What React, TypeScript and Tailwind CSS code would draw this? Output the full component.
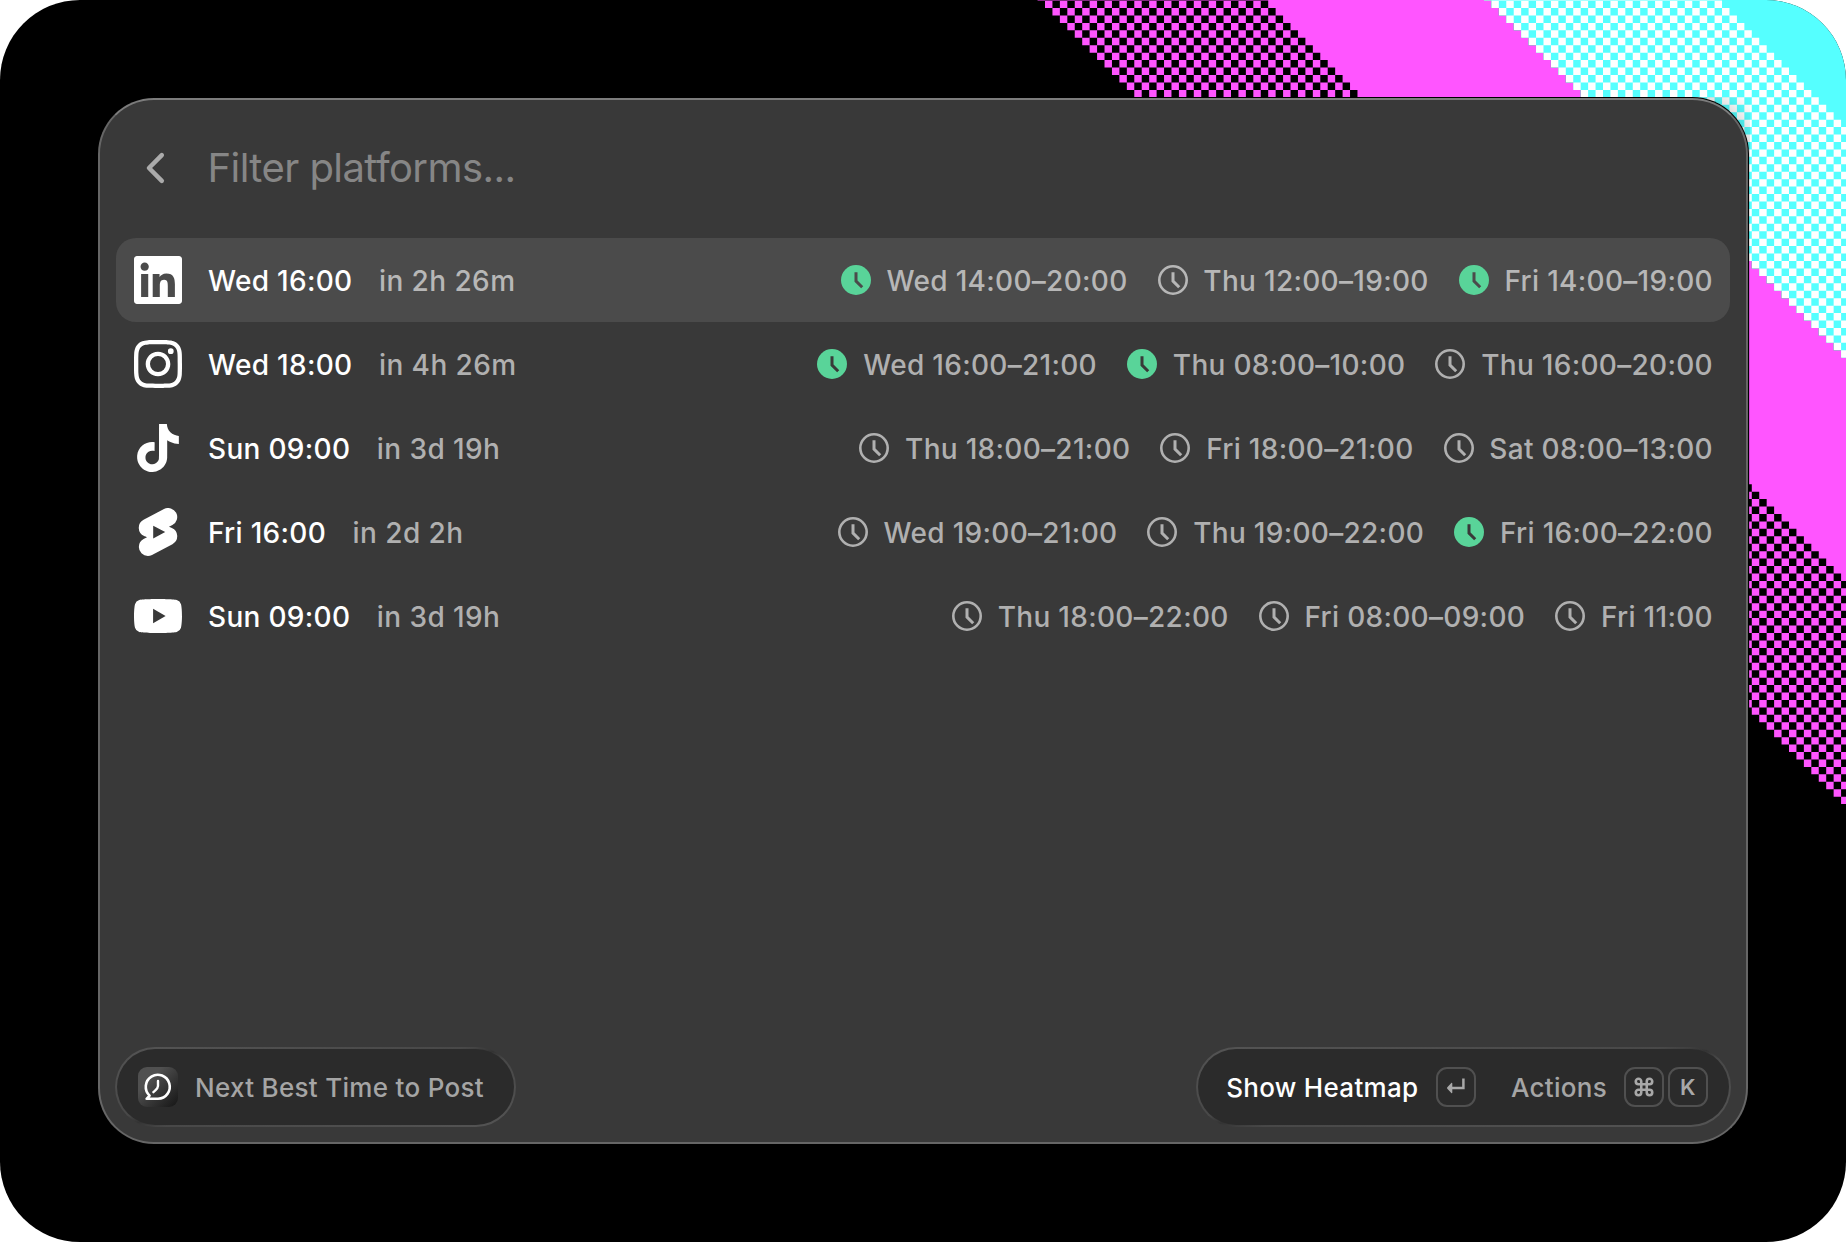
import { Command } from "lucide-react";
import {
  SiInstagram,
  SiTiktok,
  SiYoutube,
  SiYoutubeshorts,
} from "react-icons/si";
import type { ComponentType, ReactNode } from "react";

interface ISlot {
  label: string;
  best?: boolean;
}

interface IPlatform {
  id: string;
  icon: ComponentType<{ className?: string }>;
  next: string;
  countdown: string;
  slots: ISlot[];
}

function LinkedInIcon({ className }: { className?: string }) {
  return (
    <svg viewBox="0 0 24 24" fill="currentColor" className={className}>
      <path d="M20.447 20.452h-3.554v-5.569c0-1.328-.027-3.037-1.852-3.037-1.853 0-2.136 1.445-2.136 2.939v5.667H9.351V9h3.414v1.561h.046c.477-.9 1.637-1.85 3.37-1.85 3.601 0 4.267 2.37 4.267 5.455v6.286zM5.337 7.433c-1.144 0-2.063-.926-2.063-2.065 0-1.138.92-2.063 2.063-2.063 1.14 0 2.064.925 2.064 2.063 0 1.139-.925 2.065-2.064 2.065zm1.782 13.019H3.555V9h3.564v11.452zM22.5 0H1.5C.7 0 0 .7 0 1.5v21C0 23.3.7 24 1.5 24h21c.8 0 1.5-.7 1.5-1.5v-21C24 .7 23.3 0 22.5 0z" />
    </svg>
  );
}

const platforms: IPlatform[] = [
  {
    id: "linkedin",
    icon: LinkedInIcon,
    next: "Wed 16:00",
    countdown: "in 2h 26m",
    slots: [
      { label: "Wed 14:00–20:00", best: true },
      { label: "Thu 12:00–19:00" },
      { label: "Fri 14:00–19:00", best: true },
    ],
  },
  {
    id: "instagram",
    icon: SiInstagram,
    next: "Wed 18:00",
    countdown: "in 4h 26m",
    slots: [
      { label: "Wed 16:00–21:00", best: true },
      { label: "Thu 08:00–10:00", best: true },
      { label: "Thu 16:00–20:00" },
    ],
  },
  {
    id: "tiktok",
    icon: SiTiktok,
    next: "Sun 09:00",
    countdown: "in 3d 19h",
    slots: [
      { label: "Thu 18:00–21:00" },
      { label: "Fri 18:00–21:00" },
      { label: "Sat 08:00–13:00" },
    ],
  },
  {
    id: "shorts",
    icon: SiYoutubeshorts,
    next: "Fri 16:00",
    countdown: "in 2d 2h",
    slots: [
      { label: "Wed 19:00–21:00" },
      { label: "Thu 19:00–22:00" },
      { label: "Fri 16:00–22:00", best: true },
    ],
  },
  {
    id: "youtube",
    icon: SiYoutube,
    next: "Sun 09:00",
    countdown: "in 3d 19h",
    slots: [
      { label: "Thu 18:00–22:00" },
      { label: "Fri 08:00–09:00" },
      { label: "Fri 11:00" },
    ],
  },
];

// Wallpaper: diagonal dithered bands on a square grid
const CELL = 7.44;
const ORIGIN_X = 1045;
const ORIGIN_Y = 0.6;

function run(row: number, from: number, to: number) {
  const x = ORIGIN_X + (row + from) * CELL;
  const y = ORIGIN_Y + row * CELL;
  const w = (to - from) * CELL;
  return `M${x.toFixed(2)} ${y.toFixed(2)}h${w.toFixed(2)}v${CELL}h-${w.toFixed(2)}z`;
}

function buildWallpaper() {
  let magenta = "";
  let cyan = "";
  let white = "";
  for (let row = -1; row < 110; row++) {
    for (let d = 0; d < 30; d += 2) magenta += run(row, d, d + 1);
    magenta += run(row, 30, 60);
    cyan += run(row, 60, 200);
    for (let d = 60; d <= 90; d += 2) white += run(row, d, d + 1);
  }
  return { magenta, cyan, white };
}

const wallpaper = buildWallpaper();

function Wallpaper() {
  return (
    <svg
      viewBox="0 0 1846 1242"
      className="absolute inset-0 h-full w-full"
      aria-hidden="true"
    >
      <rect width="1846" height="1242" fill="#000000" />
      <path d={wallpaper.magenta} fill="#ff55ff" />
      <path d={wallpaper.cyan} fill="#55ffff" />
      <path d={wallpaper.white} fill="#ffffff" />
    </svg>
  );
}

function ClockIcon({ best }: { best?: boolean }) {
  if (best) {
    return (
      <svg viewBox="0 0 30 30" className="size-[30px] shrink-0">
        <mask id="clock-hands">
          <rect width="30" height="30" fill="white" />
          <path
            d="M15 7.2v8.9l6.2 6.2"
            fill="none"
            stroke="black"
            strokeWidth="3"
          />
        </mask>
        <circle cx="15" cy="15" r="15" fill="#59d499" mask="url(#clock-hands)" />
      </svg>
    );
  }
  return (
    <svg
      viewBox="0 0 30 30"
      fill="none"
      stroke="currentColor"
      className="size-[30px] shrink-0"
    >
      <circle cx="15" cy="15" r="13.7" strokeWidth="2.6" />
      <path d="M15 7.2v8.9l6.2 6.2" strokeWidth="3" />
    </svg>
  );
}

function PlatformRow({
  platform,
  selected,
}: {
  platform: IPlatform;
  selected: boolean;
}) {
  const Icon = platform.icon;
  return (
    <li
      className={`flex h-[84px] items-center rounded-[20px] pl-[18px] pr-[17px] text-[28px] font-medium tracking-[0.3px] ${
        selected ? "bg-[#4b4b4b] text-[#b7b7b7]" : "text-[#b0b0b0]"
      }`}
    >
      <Icon className="size-12 shrink-0 text-white" />
      <span className="ml-[26px] pt-0.5 text-white">{platform.next}</span>
      <span className="ml-[26.5px] pt-0.5 tracking-[0.42px]">
        {platform.countdown}
      </span>
      <div className="ml-auto flex items-center gap-[30px]">
        {platform.slots.map((slot) => (
          <div key={slot.label} className="flex items-center gap-[15.8px]">
            <ClockIcon best={slot.best} />
            <span className="pt-0.5">{slot.label}</span>
          </div>
        ))}
      </div>
    </li>
  );
}

function Key({ children }: { children: ReactNode }) {
  return (
    <kbd className="flex size-10 items-center justify-center rounded-[11px] border-2 border-[#505050] font-[Inter,sans-serif] text-[22px] font-semibold text-[#a8a8a8]">
      {children}
    </kbd>
  );
}

// Glass pill whose rim dims at the top-right and bottom-left corners
function Pill({
  className,
  children,
}: {
  className: string;
  children: ReactNode;
}) {
  return (
    <div
      className={`flex h-20 items-center rounded-full border-2 border-transparent [background:linear-gradient(#2b2b2b,#2b2b2b)_padding-box,linear-gradient(to_bottom_right,#545454,#484848_44%,#333333_50%,#484848_56%,#545454)_border-box] ${className}`}
    >
      {children}
    </div>
  );
}

function AppIcon() {
  return (
    <svg
      viewBox="0 0 40 40"
      fill="none"
      stroke="white"
      strokeLinejoin="round"
      className="size-10 rounded-[9px] bg-linear-to-br from-[#505050] from-30% to-[#161616]"
    >
      <path d="M20 31.8H8.6l3-3.2A12 12 0 1 1 20 31.8z" strokeWidth="2.6" />
      <path
        d="M20 14v5c0 2.5-2 3.6-4.6 6.2"
        strokeWidth="2.4"
        strokeLinecap="round"
      />
    </svg>
  );
}

export default function App() {
  return (
    <div className="h-[1242px] w-[1846px] bg-white font-[Inter,sans-serif]">
      <div className="relative h-full w-full overflow-hidden rounded-[80px] p-[97px]">
        <Wallpaper />
        {/* Clips the window shadow to its bounding box */}
        <div className="relative h-[1048px] w-[1653px] overflow-hidden p-px">
          <main className="flex h-[1046px] w-[1650px] flex-col rounded-[56px] border-2 border-[#666666] border-t-[#7c7c7c] bg-[#393939] px-4 pb-[15px] shadow-[0_0_0_1px_#000,0_0_30px_rgba(0,0,0,0.3)]">
            <header className="flex h-[138px] items-center pb-0.5 pl-[28px]">
              <svg
                viewBox="0 0 22 34"
                fill="none"
                stroke="#ababab"
                strokeWidth="4.5"
                strokeLinecap="round"
                strokeLinejoin="round"
                className="h-[34px] w-[22px]"
              >
                <path d="M17.8 4.2L5 17l12.8 12.8" />
              </svg>
              <span className="ml-[41.5px] text-[40px] tracking-[-0.57px] text-[#868686]">
                Filter platforms...
              </span>
            </header>

            <ul className="flex-1">
              {platforms.map((platform, i) => (
                <PlatformRow
                  key={platform.id}
                  platform={platform}
                  selected={i === 0}
                />
              ))}
            </ul>

            <footer className="-mx-px flex items-center justify-between text-[26px] font-medium tracking-[0.3px] text-[#a5a5a5]">
              <Pill className="w-[401px] gap-[17px] pl-[21px]">
                <AppIcon />
                <span>Next Best Time to Post</span>
              </Pill>
              <Pill className="w-[535px] justify-end pr-[21px]">
                <span className="mr-[18px] text-white">Show Heatmap</span>
                <Key>
                  <svg viewBox="0 0 20 18" className="h-[18px] w-5">
                    <path
                      d="M17.4.4V10H5"
                      fill="none"
                      stroke="currentColor"
                      strokeWidth="2.5"
                    />
                    <path
                      d="M1.3 9.3l4-4.2c.5-.5 1-.2 1 .4v9c0 .6-.5.9-1 .4l-4-4.2c-.4-.4-.4-1 0-1.4z"
                      fill="currentColor"
                    />
                  </svg>
                </Key>
                <span className="ml-[34.5px] mr-[17px]">Actions</span>
                <div className="flex gap-1">
                  <Key>
                    <Command size={22} strokeWidth={2.8} />
                  </Key>
                  <Key>K</Key>
                </div>
              </Pill>
            </footer>
          </main>
        </div>
      </div>
    </div>
  );
}
